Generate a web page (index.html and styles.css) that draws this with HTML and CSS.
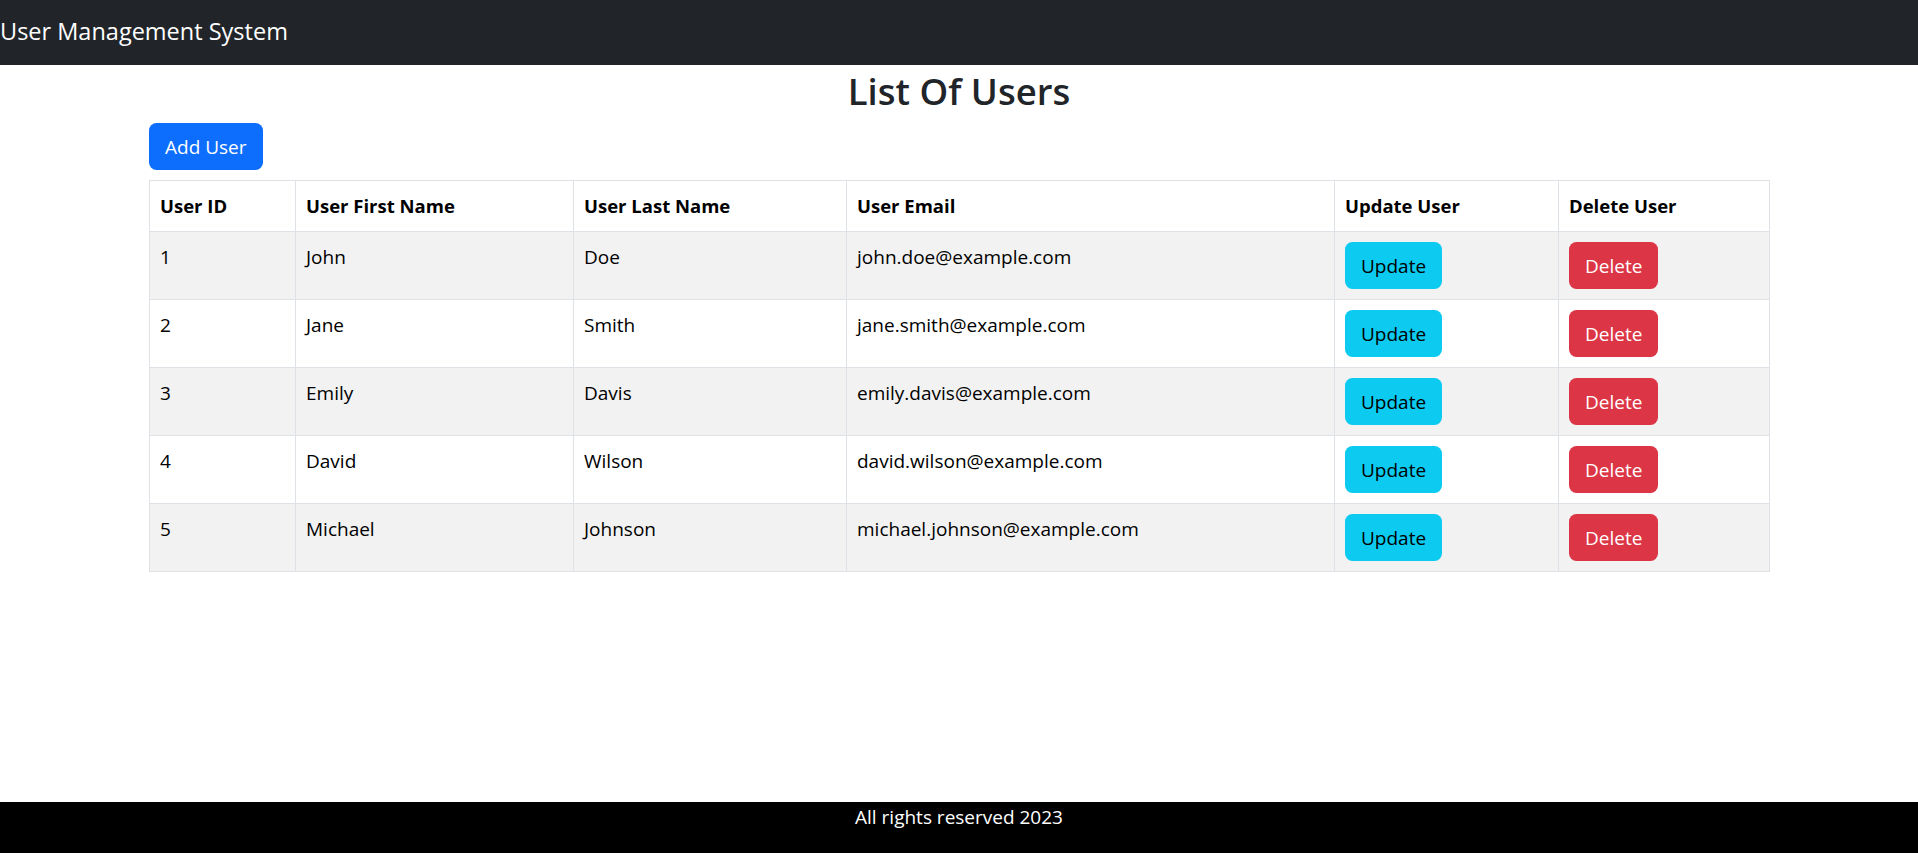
FILE: index.html
```html
<!DOCTYPE html>
<html lang="en">
<head>
<meta charset="utf-8">
<title>User Management System</title>
<link rel="stylesheet" href="styles.css">
</head>
<body>
<header class="navbar">
  <span class="brand">User Management System</span>
</header>
<main class="container">
  <h2 class="title">List Of Users</h2>
  <div class="actions"><button class="btn btn-primary">Add User</button></div>
  <table class="users">
    <colgroup>
      <col class="c-id"><col class="c-first"><col class="c-last"><col class="c-email"><col class="c-upd"><col class="c-del">
    </colgroup>
    <thead>
      <tr><th>User ID</th><th>User First Name</th><th>User Last Name</th><th>User Email</th><th>Update User</th><th>Delete User</th></tr>
    </thead>
    <tbody>
      <tr><td>1</td><td>John</td><td>Doe</td><td>john.doe@example.com</td><td><button class="btn btn-info">Update</button></td><td><button class="btn btn-danger">Delete</button></td></tr>
      <tr><td>2</td><td>Jane</td><td>Smith</td><td>jane.smith@example.com</td><td><button class="btn btn-info">Update</button></td><td><button class="btn btn-danger">Delete</button></td></tr>
      <tr><td>3</td><td>Emily</td><td>Davis</td><td>emily.davis@example.com</td><td><button class="btn btn-info">Update</button></td><td><button class="btn btn-danger">Delete</button></td></tr>
      <tr><td>4</td><td>David</td><td>Wilson</td><td>david.wilson@example.com</td><td><button class="btn btn-info">Update</button></td><td><button class="btn btn-danger">Delete</button></td></tr>
      <tr><td>5</td><td>Michael</td><td>Johnson</td><td>michael.johnson@example.com</td><td><button class="btn btn-info">Update</button></td><td><button class="btn btn-danger">Delete</button></td></tr>
    </tbody>
  </table>
</main>
<footer class="footer">All rights reserved 2023</footer>
</body>
</html>
```
FILE: styles.css
```css
* { box-sizing: border-box; }
html, body { margin: 0; padding: 0; }
body {
  font-family: "Open Sans", "Noto Sans", "Liberation Sans", sans-serif;
  font-size: 19px;
  line-height: 30px;
  color: #212529;
  background: #fff;
  min-height: 100vh;
  display: flex;
  flex-direction: column;
}
.navbar {
  background: #212529;
  height: 65px;
  display: flex;
  align-items: center;
  flex-shrink: 0;
}
.brand {
  color: #fff;
  font-size: 23.5px;
  line-height: 37px;
  padding-bottom: 2px;
}
.container {
  width: 1650px;
  margin: 0 auto;
  padding: 0 15px;
  flex: 1;
}
.title {
  margin: 0 0 8px;
  padding-top: 2px;
  font-size: 36.5px;
  line-height: 48px;
  font-weight: 600;
  text-align: center;
  color: #212529;
}
.actions { height: 57px; }
.btn {
  font-family: inherit;
  font-size: 19px;
  line-height: 30px;
  padding: 7.5px 15px;
  border: 1px solid transparent;
  border-radius: 7.5px;
  cursor: pointer;
}
.btn-primary { background: #0d6efd; color: #fff; }
.btn-info { background: #0dcaf0; color: #000; }
.btn-danger { background: #dc3545; color: #fff; }
.users {
  width: 100%;
  border-collapse: collapse;
  table-layout: fixed;
  color: #000;
}
.c-id { width: 146px; }
.c-first { width: 278px; }
.c-last { width: 273px; }
.c-email { width: 488px; }
.c-upd { width: 224px; }
.c-del { width: 211px; }
.users th, .users td {
  border: 1px solid #dee2e6;
  padding: 10px;
  text-align: left;
  vertical-align: top;
}
.users th { font-weight: 700; font-size: 18.5px; }
.users tbody tr:nth-child(odd) td { background: #f2f2f2; }
.footer {
  background: #000;
  color: #fff;
  text-align: center;
  height: 51px;
  line-height: 30px;
  flex-shrink: 0;
}
```
